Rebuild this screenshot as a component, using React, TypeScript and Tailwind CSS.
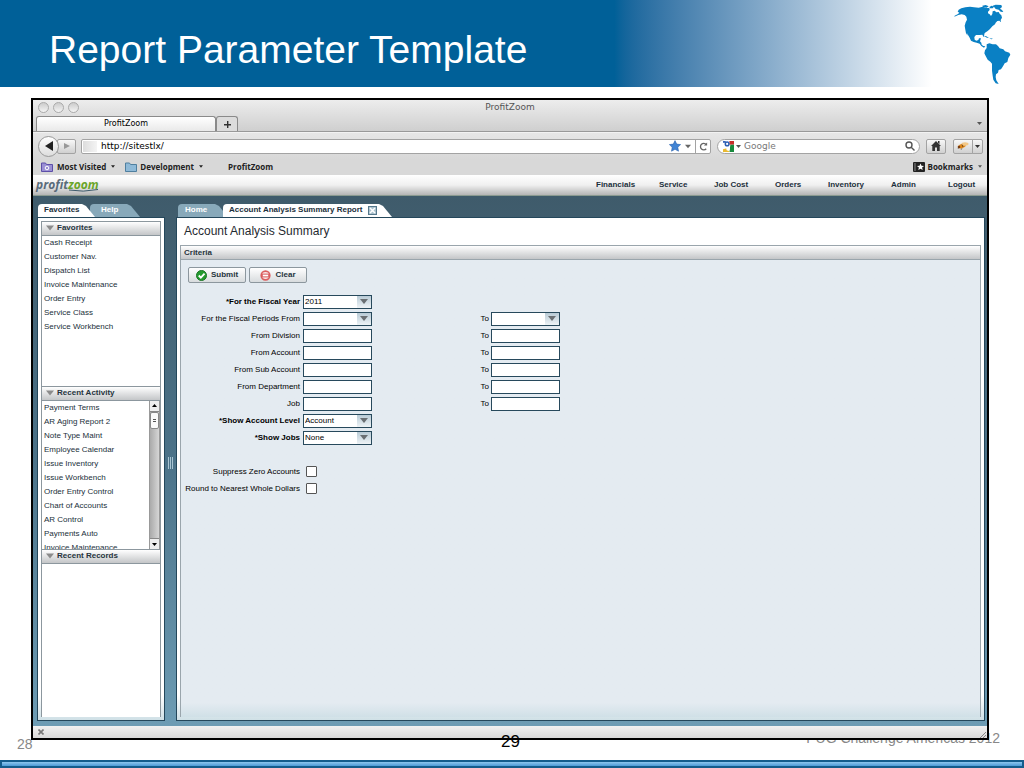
import { useState } from "react";
import type { ReactNode } from "react";
import clsx from "clsx";

const menu = [
  { label: "Financials", width: "w-[63px]" },
  { label: "Service", width: "w-[55px]" },
  { label: "Job Cost", width: "w-[61px]" },
  { label: "Orders", width: "w-[53px]" },
  { label: "Inventory", width: "w-[63px]" },
  { label: "Admin", width: "w-[57px]" },
  { label: "Logout", width: "w-[27px]" },
];

const favorites = [
  "Cash Receipt",
  "Customer Nav.",
  "Dispatch List",
  "Invoice Maintenance",
  "Order Entry",
  "Service Class",
  "Service Workbench",
];

const recentActivity = [
  "Payment Terms",
  "AR Aging Report 2",
  "Note Type Maint",
  "Employee Calendar",
  "Issue Inventory",
  "Issue Workbench",
  "Order Entry Control",
  "Chart of Accounts",
  "AR Control",
  "Payments Auto",
  "Invoice Maintenance",
];

const Down = ({ className = "w-[5px] h-[3px]" }: { className?: string }) => (
  <svg viewBox="0 0 10 6" className={clsx("shrink-0", className)} fill="currentColor" aria-hidden="true">
    <path d="M0 0h10L5 6z" />
  </svg>
);

const AmericasMap = () => (
  <svg viewBox="0 0 282 261" className="w-[94px] h-[87px]" aria-hidden="true">
    <g fill="#0a80c4">
      <path d="M74 47l10-5 4-4-5-3 3-6 8-4 12-3 14-2 12 2 14 1 12-3 10 4 10 0 1 6-5 5 0 5 5 3 4 5 4-6 1-8 6-2 5 5 7-1 3 5 5 5 2 7-4 7 1 7-5-5-6 1-5 5-2 5-8 6-7 8-7 6-9 6-2 8-1 5-4-8-8 1-11 0-5 6 1 8 5 3 6-2 2-5 6 0-3 9 4 4 1 6 5 4 6 1-4 4-8-5-5-7-9-3-9-2-8-4-4-9-5-8-4-7 3 9-5-7-2-11-2-12 3-10 4-8-2-9-5-5-9-2-10 2-12 5z" />
      <path d="M157 17l10-2 9 4-6 4-11-1zM178 21l7-4 7 3-4 5-8 0zM188 17l9-3 17 1 2 6-6 5 6 4 4 6-8-1-6-6-9-2-4-5zM161 107l8 2 8 5-6-1-8-4zM178 114l11 2-5 2z" />
      <path d="M170 133l8-3 10 3 10 0 6 5 5 7 11 3 5 6 13 4 3 6-6 10-3 12-8 4-5 9-6 9-7 2-2 8-6 5-1 8 2 10 7 11-9-2-7-11-2-12-2-15 0-21-5-6-8-6-6-11-4-8 2-9 5-7z" />
    </g>
  </svg>
);

const ToolButton = ({ label, className, children }: { label: string; className?: string; children: ReactNode }) => (
  <button
    aria-label={label}
    className={clsx(
      "h-[15px] flex items-center justify-center border border-[#a3a3a3] rounded-[2px] bg-linear-to-b from-[#f8f8f8] to-[#d0d0d0] text-[#333]",
      className
    )}
  >
    {children}
  </button>
);

const BrowserChrome = () => {
  const [url, setUrl] = useState("http://sitestlx/");
  const [query, setQuery] = useState("");

  return (
    <header className="font-['DejaVu_Sans',sans-serif] text-[8px] leading-[10px] text-[#222]">
      <div className="bg-linear-to-b from-[#ededed] to-[#cfcfcf] border-b border-[#999]">
        <div className="grid grid-cols-3 items-center h-4 px-1 pb-[2px]">
          <div className="flex gap-1 pl-px">
            {["Close", "Minimize", "Zoom"].map((name) => (
              <button
                key={name}
                aria-label={name}
                className="size-[11px] rounded-full border border-[#aaa] bg-linear-to-b from-[#ccc] to-[#f4f4f4]"
              />
            ))}
          </div>
          <div className="text-center text-[9px] text-[#555]">ProfitZoom</div>
        </div>
        <div className="flex items-end h-[15px] pl-[3px] pr-1">
          <button className="w-[180px] h-[15px] rounded-t-[3px] border border-b-0 border-[#8a8a8a] bg-linear-to-b from-white to-[#e9e9e9] text-black">
            ProfitZoom
          </button>
          <button
            aria-label="New tab"
            className="w-[22px] h-[15px] flex items-center justify-center rounded-t-[3px] border border-b-0 border-[#8a8a8a] bg-[#dcdcdc]"
          >
            <svg viewBox="0 0 7 7" className="size-[7px]" fill="#333">
              <path d="M3 0h1.400v3H7v1.400H4.400V7H3V4.400H0V3h3z" />
            </svg>
          </button>
          <button aria-label="List tabs" className="ml-auto h-[15px] px-px text-[#555]">
            <Down />
          </button>
        </div>
      </div>

      <div className="flex items-center h-[27px] pl-[5px] pr-1 bg-linear-to-b from-[#e6e6e6] to-[#d8d8d8] border-t border-[#f2f2f2]">
        <button
          aria-label="Back"
          className="size-[21px] shrink-0 z-10 flex items-center justify-center rounded-full border border-[#999] bg-linear-to-b from-white to-[#ddd]"
        >
          <svg viewBox="0 0 8 10" className="w-2 h-[10px]" fill="#222">
            <path d="M8 0v10L0 5z" />
          </svg>
        </button>
        <ToolButton label="Forward" className="w-[19px] -ml-[2px] shrink-0">
          <svg viewBox="0 0 6 6" className="size-[6px]" fill="#999">
            <path d="M0 0v6l6-3z" />
          </svg>
        </ToolButton>
        <div className="flex-1 flex items-center h-[15px] ml-[5px] border border-[#a3a3a3] rounded-[2px] bg-white">
          <span className="w-[14px] h-[11px] ml-px bg-linear-to-r from-[#ddd] to-[#f4f4f4]" />
          <input
            aria-label="Address"
            value={url}
            onChange={(e) => setUrl(e.target.value)}
            className="flex-1 min-w-0 pl-1 text-[9px] text-black outline-none"
          />
          <svg viewBox="0 0 12 12" className="size-3" fill="#3f83d4" stroke="#2a62ae" strokeWidth="0.600">
            <path d="M6 .6l1.700 3.500 3.900.5-2.800 2.700.7 3.900L6 9.300l-3.500 1.900.7-3.900L.4 4.600l3.900-.5z" />
          </svg>
          <Down className="w-[6px] h-[5px] mx-1 text-[#666]" />
          <button aria-label="Reload" className="w-[15px] h-[13px] flex items-center justify-center border-l border-[#a3a3a3]">
            <svg viewBox="0 0 10 10" className="size-[9px]" fill="none" stroke="#666" strokeWidth="1.500">
              <path d="M8 7.500A3.600 3.600 0 1 1 8 2.800" />
              <path d="M9 .5v3.500H5.500z" fill="#666" stroke="none" />
            </svg>
          </button>
        </div>
        <div className="w-[203px] flex items-center h-[15px] ml-[6px] pl-[5px] pr-1 border border-[#a3a3a3] rounded-full bg-white">
          <svg viewBox="0 0 12 12" className="size-[11px] shrink-0" aria-hidden="true">
            <path d="M0 0h12v12H0z" fill="#fff" />
            <path d="M7 0h5v4H7z" fill="#c92e2a" />
            <path d="M8 4h4v8H7z" fill="#188a3d" />
            <path d="M0 9l4-1 3 4H0z" fill="#e9b932" />
            <path d="M0 0h3v2H0z" fill="#3a66b8" />
            <circle cx="4.500" cy="3.200" r="2.800" fill="#2c5fb3" />
            <circle cx="4.500" cy="3.200" r="1.200" fill="#fff" />
            <circle cx="5.500" cy="8.500" r="2" fill="#fff" />
          </svg>
          <Down className="w-[5px] h-[3px] ml-[2px] text-[#555]" />
          <input
            aria-label="Search the web"
            placeholder="Google"
            value={query}
            onChange={(e) => setQuery(e.target.value)}
            className="flex-1 min-w-0 pl-[3px] text-[9px] placeholder:text-[#777] outline-none"
          />
          <svg viewBox="0 0 10 10" className="size-[10px]" fill="none" stroke="#555" strokeWidth="1.400">
            <circle cx="4" cy="4" r="3" />
            <path d="M6.200 6.200L9.500 9.500" />
          </svg>
        </div>
        <ToolButton label="Home page" className="w-5 ml-[6px]">
          <svg viewBox="0 0 10 10" className="size-[10px]" fill="#333">
            <path d="M5 0l5 5H8.700v5H6V6.500H4V10H1.300V5H0zM7 0h1.500v3L7 1.800z" />
          </svg>
        </ToolButton>
        <div className="flex ml-[7px]">
          <ToolButton label="Firebug" className="w-5 rounded-r-none">
            <svg viewBox="0 0 12 10" className="w-3 h-[10px]">
              <path d="M2 6l-1 2M5 7l-1 2" stroke="#666" strokeWidth="0.700" />
              <ellipse cx="5" cy="5" rx="4" ry="2" fill="#e08a1e" transform="rotate(-20 5 5)" />
              <ellipse cx="8" cy="3" rx="3.500" ry="1.700" fill="#f3c887" />
              <circle cx="2" cy="6" r="1.300" fill="#7a3d10" />
              <path d="M5 3.500l1 2.500" stroke="#5b3210" strokeWidth="0.800" />
            </svg>
          </ToolButton>
          <ToolButton label="Firebug menu" className="w-[11px] -ml-px rounded-l-none">
            <Down />
          </ToolButton>
        </div>
      </div>

      <nav className="flex items-center h-4 pl-2 pr-[5px] pb-px bg-[#d8d8d8] font-['Open_Sans',sans-serif] font-bold">
        <button className="flex items-center">
          <svg viewBox="0 0 12 10" className="w-3 h-[10px] mr-1">
            <path d="M.5 1h4l1 1.500h6V9.500H.5z" fill="#9a8fd4" stroke="#5d4fa8" />
            <circle cx="6" cy="6" r="1.800" fill="none" stroke="#fff" />
          </svg>
          Most Visited
          <Down className="w-1 h-[3px] ml-[5px]" />
        </button>
        <button className="flex items-center ml-[10px]">
          <svg viewBox="0 0 12 10" className="w-3 h-[10px] mr-[3px]">
            <path d="M.5 1h4l1 1.500h6V9.500H.5z" fill="#8fbad8" stroke="#4f7f9f" />
          </svg>
          Development
          <Down className="w-1 h-[3px] ml-[5px]" />
        </button>
        <a href="#profitzoom" className="ml-[25px]">
          ProfitZoom
        </a>
        <button className="flex items-center ml-auto">
          <svg viewBox="0 0 12 10" className="w-3 h-[10px] mr-[3px]">
            <rect width="12" height="10" rx="1" fill="#222" />
            <path d="M2 1v8" stroke="#888" />
            <path d="M7.500 1.500l1 2.200 2.500.2-1.900 1.600.6 2.500-2.200-1.300L5.300 8l.6-2.500L4 3.900l2.500-.2z" fill="#fff" />
          </svg>
          Bookmarks
          <Down className="w-1 h-[3px] ml-[5px] text-[#555]" />
        </button>
      </nav>
    </header>
  );
};

const Tab = ({ active, first, className, children }: { active?: boolean; first?: boolean; className?: string; children: ReactNode }) => (
  <div
    className={clsx(
      "h-[13px] flex items-center pl-[6px] pb-px rounded-tl-[4px] font-bold",
      "[clip-path:polygon(0_0,calc(100%-13px)_0,calc(100%-9px)_2px,100%_100%,0_100%)]",
      active ? "z-10 bg-white text-[#1c2f3b]" : "bg-[#88a9ba] text-white",
      !first && "-ml-[5px]",
      className
    )}
  >
    {children}
  </div>
);

const SectionHeader = ({ title }: { title: string }) => (
  <h2 className="shrink-0 h-[15px] px-1 border border-[#8c979e] bg-linear-to-b from-white to-[#c4c6c8] font-bold text-[#26343d]">
    <button className="h-3 flex items-center gap-[3px]">
      <Down className="w-2 h-[6px] text-[#8b8b8b]" />
      {title}
    </button>
  </h2>
);

const LinkList = ({ items }: { items: string[] }) => (
  <ul className="flex-1 min-w-0 h-full pl-[2px] overflow-hidden">
    {items.map((item) => (
      <li key={item} className="h-[14px] leading-[14px] whitespace-nowrap">
        <a href="#open">{item}</a>
      </li>
    ))}
  </ul>
);

const ScrollBar = () => (
  <div className="w-[11px] flex flex-col border-x border-[#999] bg-linear-to-r from-[#aaa] to-[#d6d6d6]">
    <button aria-label="Scroll up" className="h-[11px] flex items-center justify-center border-b border-[#888] bg-[#eee] text-black">
      <Down className="w-[5px] h-[3px] rotate-180" />
    </button>
    <div className="h-[17px] flex flex-col items-center justify-center gap-px rounded-[2px] border border-[#888] bg-[#fafafa]">
      <span className="w-[3px] h-px bg-[#555]" />
      <span className="w-[3px] h-px bg-[#555]" />
    </div>
    <button aria-label="Scroll down" className="h-[11px] mt-auto flex items-center justify-center border-t border-[#888] bg-[#eee] text-black">
      <Down />
    </button>
  </div>
);

const Sidebar = () => (
  <aside className="w-[128px] shrink-0 flex flex-col">
    <div className="flex pl-px">
      <Tab active first className="w-[57px]">
        Favorites
      </Tab>
      <Tab className="w-[50px] pl-[11px]">Help</Tab>
    </div>
    <div className="flex-1 flex flex-col p-[3px] border border-[#24475b] bg-linear-to-b from-white from-95% to-[#cfe0e6]">
      <SectionHeader title="Favorites" />
      <div className="grow-[150] basis-0 border-x border-[#8c979e] bg-white">
        <LinkList items={favorites} />
      </div>
      <SectionHeader title="Recent Activity" />
      <div className="grow-[149] basis-0 min-h-0 flex overflow-hidden border-x border-[#8c979e] bg-white">
        <LinkList items={recentActivity} />
        <ScrollBar />
      </div>
      <SectionHeader title="Recent Records" />
      <div className="grow-[153] basis-0 border-x border-[#8c979e] bg-white" />
    </div>
  </aside>
);

const Select = ({ id, options }: { id: string; options: string[] }) => (
  <div className="relative w-[69px]">
    <select
      id={id}
      className="block w-full h-[14px] pl-px pr-4 appearance-none border border-[#27495c] bg-white text-[8px] leading-[12px] text-black"
    >
      {options.map((o) => (
        <option key={o}>{o}</option>
      ))}
    </select>
    <span className="absolute right-px top-px w-[14px] h-3 flex items-center justify-center bg-linear-to-b from-[#b9cbd6] to-[#eef3f6] text-[#6a6f73] pointer-events-none">
      <Down className="w-2 h-[5px]" />
    </span>
  </div>
);

const TextBox = ({ id }: { id: string }) => (
  <input id={id} className="w-[69px] h-[14px] px-[2px] border border-[#27495c] bg-white outline-none" />
);

type Field = { id: string; label: string; bold?: boolean; options?: string[]; to?: boolean };

const fields: Field[] = [
  { id: "year", label: "*For the Fiscal Year", bold: true, options: ["2011", "2012"] },
  { id: "period", label: "For the Fiscal Periods From", options: [""], to: true },
  { id: "division", label: "From Division", to: true },
  { id: "account", label: "From Account", to: true },
  { id: "sub", label: "From Sub Account", to: true },
  { id: "department", label: "From Department", to: true },
  { id: "job", label: "Job", to: true },
  { id: "level", label: "*Show Account Level", bold: true, options: ["Account", "Division"] },
  { id: "jobs", label: "*Show Jobs", bold: true, options: ["None", "All"] },
];

const FieldRow = ({ id, label, bold, options, to }: Field) => (
  <div className="flex items-center h-[17px] text-black">
    <label htmlFor={id} className={clsx("w-[119px] mr-[3px] text-right whitespace-nowrap", bold && "font-bold")}>
      {label}
    </label>
    {options ? <Select id={id} options={options} /> : <TextBox id={id} />}
    {to && (
      <>
        <label htmlFor={`${id}-to`} className="w-[117px] mr-[2px] text-right">
          To
        </label>
        {options ? <Select id={`${id}-to`} options={options} /> : <TextBox id={`${id}-to`} />}
      </>
    )}
  </div>
);

const CheckRow = ({ id, label }: { id: string; label: string }) => (
  <div className="flex items-center h-[17px] text-black">
    <label htmlFor={id} className="w-[119px] mr-[6px] text-right whitespace-nowrap">
      {label}
    </label>
    <input id={id} type="checkbox" className="size-[11px] appearance-none border border-[#555] rounded-[1px] bg-white checked:bg-[#27495c]" />
  </div>
);

const formButton =
  "w-[58px] h-4 flex items-center justify-center gap-1 rounded-[2px] border border-[#8c979e] bg-linear-to-b from-white to-[#d8dcde] font-bold text-[#26343d]";

const Report = () => (
  <main className="flex-1 min-w-0 flex flex-col">
    <div className="flex pl-[2px]">
      <Tab first className="w-[50px] pl-[7px]">
        Home
      </Tab>
      <Tab active className="w-[169px]">
        Account Analysis Summary Report
        <button aria-label="Close tab" className="ml-[5px] size-[9px] shrink-0 border border-[#55788c] bg-[#a9c0cc] text-white">
          <svg viewBox="0 0 7 7" className="size-[7px]" stroke="currentColor" strokeWidth="1.500">
            <path d="M1 1l5 5M6 1L1 6" />
          </svg>
        </button>
      </Tab>
    </div>
    <div className="flex-1 flex flex-col px-[3px] pb-[3px] border border-[#24475b] bg-linear-to-b from-white from-95% to-[#cfe0e6]">
      <h1 className="h-[27px] pl-1 leading-[26px] text-[12px] text-[#1f2a31]">Account Analysis Summary</h1>
      <section className="flex-1 border-x border-[#9aa5ac] bg-linear-to-b from-[#e4ebf1] from-97% to-[#d0e0e7]">
        <h2 className="h-[15px] pl-[3px] leading-[13px] border-y border-[#9aa5ac] bg-linear-to-b from-white to-[#c4c6c8] font-bold text-[#26343d]">
          Criteria
        </h2>
        <form onSubmit={(e) => e.preventDefault()}>
          <div className="flex gap-[3px] pt-[7px] pb-[10px] pl-[7px]">
            <button type="submit" className={formButton}>
              <svg viewBox="0 0 12 12" className="size-[11px]">
                <circle cx="6" cy="6" r="5.500" fill="#259b2f" stroke="#157020" />
                <path d="M3 6l2.300 2.300L9.300 4" fill="none" stroke="#fff" strokeWidth="2" />
              </svg>
              Submit
            </button>
            <button type="reset" className={formButton}>
              <svg viewBox="0 0 12 12" className="size-[11px]">
                <circle cx="6" cy="6" r="4.700" fill="#fbe9e9" stroke="#dc5f60" strokeWidth="1.800" />
                <path d="M2.500 4.500h7v3h-7z" fill="#fff" stroke="#d34a4d" strokeWidth="1" />
              </svg>
              Clear
            </button>
          </div>
          {fields.map((f) => (
            <FieldRow key={f.id} {...f} />
          ))}
          <div className="pt-[17px]">
            <CheckRow id="suppress" label="Suppress Zero Accounts" />
            <CheckRow id="round" label="Round to Nearest Whole Dollars" />
          </div>
        </form>
      </section>
    </div>
  </main>
);

export default function App() {
  return (
    <div className="min-h-screen flex flex-col bg-white font-['Liberation_Sans',Arial,sans-serif]">
      <header className="h-[87px] flex items-center justify-between pl-[49px] bg-linear-to-r from-[#006098] from-60% to-white to-91%">
        <h1 className="pt-3 text-[39px] leading-[44px] text-white">Report Parameter Template</h1>
        <AmericasMap />
      </header>

      <div className="relative z-10 flex-1 flex flex-col mt-[11px] ml-[31px] mr-[35px] border-2 border-black text-[8px] leading-[10px] text-[#22303a]">
        <BrowserChrome />
        <div className="h-5 flex items-center justify-between pl-[3px] pr-3 bg-linear-to-b from-white via-[#f0f0f0] to-[#b5b5b5]">
          <div className="flex flex-col font-['Open_Sans',sans-serif] text-[12px] leading-[14px] italic font-bold text-[#5a6b7a]">
            <span>
              profit<span className="text-[#6aa52a]">zoom</span>
            </span>
            <svg viewBox="0 0 30 3" className="w-[30px] h-[3px] -mt-[3px] self-end" fill="none" stroke="#3c5a6b">
              <path d="M0 1q14 2.500 29-.5" />
            </svg>
          </div>
          <nav className="flex font-bold text-[#1c2f3b]">
            {menu.map((m) => (
              <a key={m.label} href="#menu" className={m.width}>
                {m.label}
              </a>
            ))}
          </nav>
        </div>
        <div className="flex-1 flex pt-2 pb-[5px] pl-1 pr-[2px] border-t border-[#8a9a90] bg-linear-to-b from-[#3f5b6b] via-[#4c7389] to-[#6d9cb4]">
          <Sidebar />
          <div className="w-[11px] flex items-center justify-center gap-px">
            <span className="w-px h-3 bg-[#a9c5d3]" />
            <span className="w-px h-3 bg-[#a9c5d3]" />
            <span className="w-px h-3 bg-[#a9c5d3]" />
          </div>
          <Report />
        </div>
        <div className="h-3 flex items-center justify-between pl-[5px] pr-px bg-linear-to-b from-[#f1f1f1] to-[#d9d9d9]">
          <svg viewBox="0 0 6 6" className="size-[6px]" stroke="#777" strokeWidth="1.600">
            <path d="M.5.5l5 5M5.500.5l-5 5" />
          </svg>
          <svg viewBox="0 0 6 6" className="size-[6px] self-end" stroke="#888">
            <path d="M0 6l6-6M3 6l3-3" />
          </svg>
        </div>
      </div>

      <footer className="h-[28px] flex flex-col">
        <div className="flex-1 grid grid-cols-3 -mt-[9px] pl-[17px] pr-6 text-[14px] leading-[14px] text-[#888]">
          <span className="pt-[6px]">28</span>
          <span className="relative z-20 pt-[2px] pl-1 text-center text-[17px] leading-[17px] text-black">29</span>
          <span className="text-right">PUG Challenge Americas 2012</span>
        </div>
        <div className="h-2 border-2 border-[#145c8c] bg-linear-to-b from-[#8cc6ee] to-[#4c9ad6]" />
      </footer>
    </div>
  );
}
